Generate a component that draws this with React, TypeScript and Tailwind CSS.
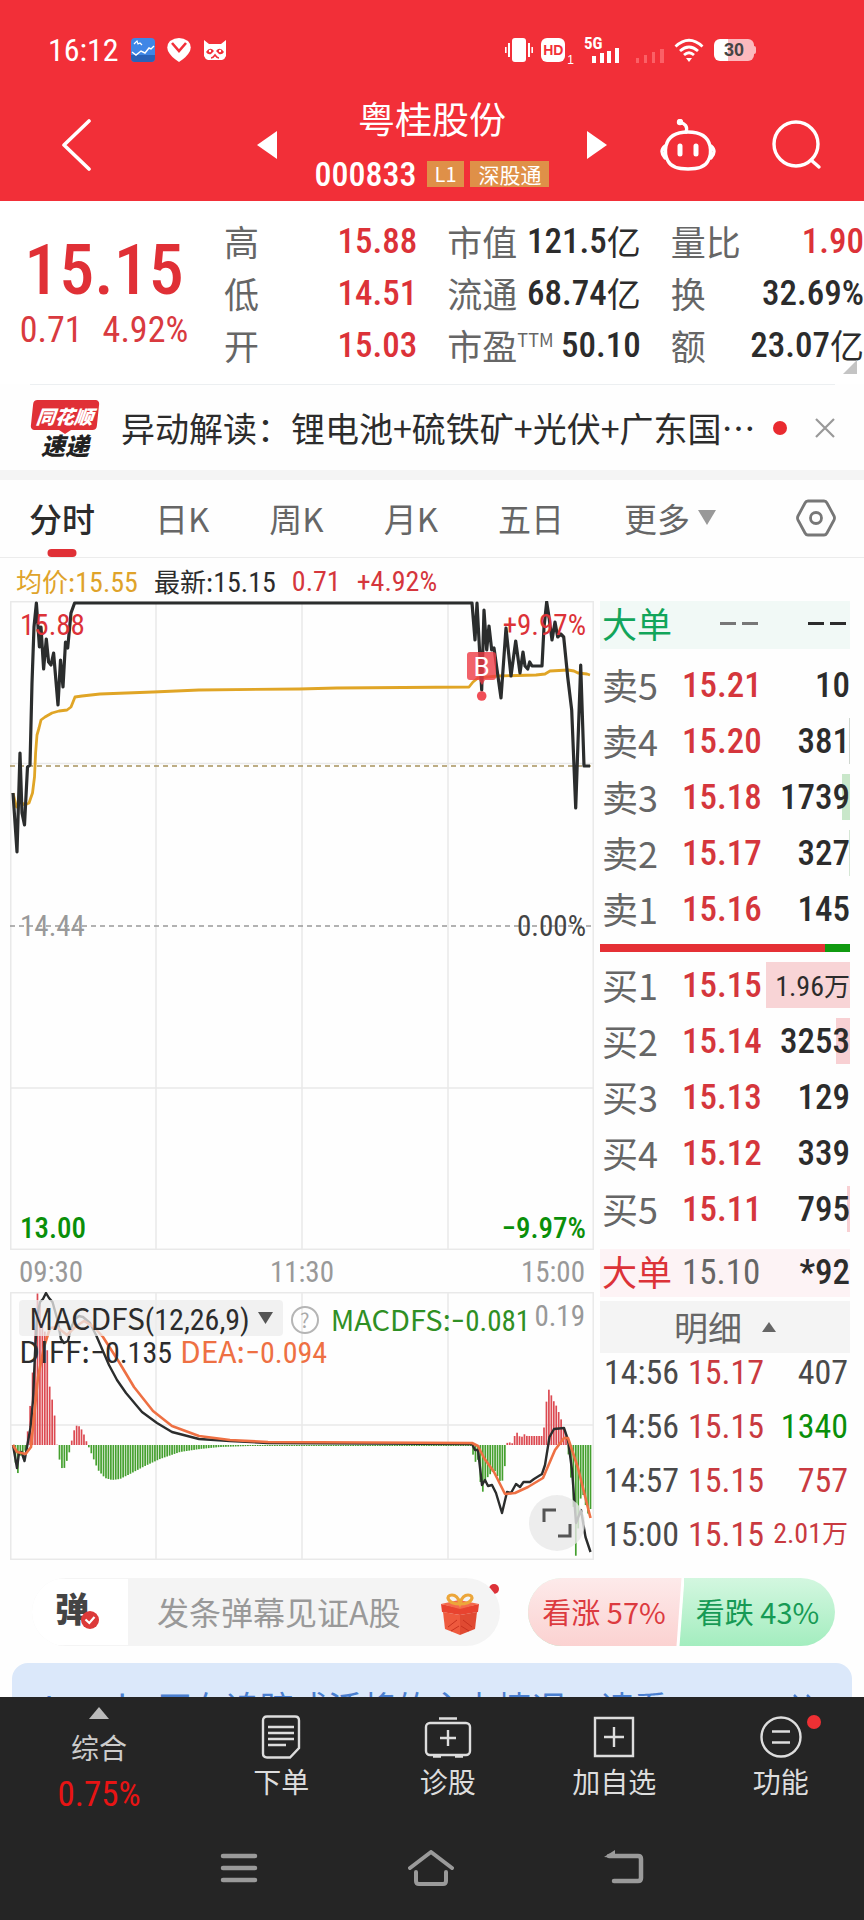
import React from "react";

const NUM =
  "font-['Roboto_Condensed','Liberation_Sans_Narrow',Roboto,'Noto_Sans_CJK_SC',sans-serif]";

type Point = [number, number];

const toPath = (points: Point[]) => points.map((p) => p.join(",")).join(" ");

/* ---------- chart data ---------- */

const PRICE: Point[] = [
  [13, 793], [17, 852], [20, 753], [22, 813], [24.5, 825], [27.5, 767], [30, 765], [32, 683], [34, 627],
  [36.4, 603], [39.4, 647], [41, 627], [43.6, 669], [46.3, 639], [48.6, 662], [51, 665], [53.6, 653],
  [58, 705], [60.5, 660], [63, 687], [65.5, 642], [67.7, 648], [71, 613], [74.6, 603], [472, 603],
  [475, 640], [477, 603], [479, 640], [481.7, 690], [484, 610], [486.7, 650], [489, 626], [491.7, 650],
  [494, 648], [501, 698], [506, 628], [511, 676], [515.7, 641], [520, 673], [523, 652], [525, 666],
  [527.7, 669], [529.7, 662], [532, 666], [542, 666], [544, 627], [546.7, 602], [549, 617], [552, 640],
  [555, 622], [557.7, 637], [560.7, 634], [563.7, 637], [567.7, 677], [571.7, 710], [575.7, 808],
  [580.7, 665], [584, 766], [590, 766],
];

const AVERAGE: Point[] = [
  [13, 793], [16.5, 807], [20, 801], [24.5, 805], [29, 803], [32.5, 793], [34.5, 777], [35.6, 753],
  [37, 735], [39, 728], [41, 720], [45, 717], [52, 713], [59, 711], [67, 710], [71, 707], [75, 697],
  [82, 696], [100, 694], [153, 692], [199, 690], [299, 689], [337, 688], [469, 687], [473, 682],
  [478, 678], [497.5, 676], [536, 675], [545, 674], [550, 671], [568, 670], [574, 671], [578, 673],
  [587, 674], [590, 675],
];

const DIFF: Point[] = [
  [13, 1445], [17, 1468], [19, 1453], [21.5, 1452], [24.5, 1461], [27, 1447], [30.6, 1427], [33, 1400],
  [35, 1353], [37, 1317], [40, 1302], [43, 1299], [46, 1293], [49, 1298], [52.5, 1302], [57.5, 1320],
  [61, 1339], [64, 1343], [68, 1341], [71, 1328], [75, 1319], [79, 1316], [83, 1317], [90, 1323],
  [96, 1335], [109, 1365], [117, 1380], [126, 1393], [142, 1412], [157, 1423], [172, 1432], [199, 1439],
  [230, 1441], [268, 1443], [472, 1444], [475, 1450], [478, 1450], [482, 1485], [485, 1480], [488, 1486],
  [492, 1485], [496, 1493], [502, 1513], [507, 1492], [511, 1493], [516, 1484], [520, 1487], [523.5, 1482],
  [530, 1482], [534, 1479], [542, 1474], [545, 1465], [549.5, 1437], [554, 1429], [564, 1428], [568, 1440],
  [572, 1470], [576, 1523], [581, 1510], [585.5, 1537], [590.5, 1552],
];

const DEA: Point[] = [
  [13, 1445], [17, 1452], [25.6, 1454], [31, 1447], [34, 1417], [38, 1377], [44, 1347], [50, 1328],
  [57, 1327], [67, 1335], [75, 1327], [84, 1321], [94, 1327], [103, 1337], [119, 1362], [134, 1387],
  [153, 1411], [172, 1426], [199, 1436], [230, 1440], [268, 1442], [472, 1443], [478, 1446], [484, 1458],
  [494, 1472], [505, 1494], [515, 1493], [528, 1487], [543, 1478], [555, 1450], [564, 1438], [568, 1438],
  [578, 1468], [590.5, 1518],
];

/* Histogram outline: positive values rise above the zero axis. */
const HISTOGRAM: Point[] = [
  [13, -2], [15, -12], [17, -37], [19.5, -12], [22, -8], [24.5, -13], [26.5, 7], [29, 21], [31, 53],
  [34, 90], [36.5, 153], [39, 149], [41.5, 124], [44, 117], [46.5, 106], [50, 54], [53.5, 40], [56, 16],
  [58, -14], [60.5, -15], [63, -29], [65.5, -18], [68, -14], [70.5, -1], [73, 10], [75, 18], [77.5, 20],
  [80, 18], [82.5, 14], [85, 8], [87, 2], [90, -5], [94, -15], [98, -25], [105, -33], [112, -35],
  [120, -34], [130, -29], [145, -21], [160, -14], [180, -7], [200, -4], [220, -2], [250, -1], [471, -1],
  [475, -18], [477.5, -12], [479.5, -25], [481.7, -55], [484, -38], [487, -33], [492, -27], [495, -26],
  [501, -38], [504, -33], [506, -5], [508, 6], [511, 0], [513, 3], [516, 14], [518.5, 10], [521, 7],
  [524, 11], [527, 9], [543, 9], [545, 26], [547, 50], [549.5, 57], [552, 47], [557, 38], [562, 23],
  [564.5, 14], [567, 6], [569, -15], [571.5, -38], [574, -70], [576, -115], [578.5, -80], [581, -50],
  [583.5, -50], [586, -62], [588.5, -70], [590.5, -64],
];

const valueAt = (x: number) => {
  for (let i = 1; i < HISTOGRAM.length; i++) {
    const [x0, y0] = HISTOGRAM[i - 1];
    const [x1, y1] = HISTOGRAM[i];
    if (x <= x1) return y0 + ((y1 - y0) * (x - x0)) / (x1 - x0);
  }
  return 0;
};

const BARS = Array.from({ length: 237 }, (_, i) => {
  const x = 13 + i * 2.447;
  return { x, v: valueAt(x) };
});

/* ---------- header ---------- */

function StatusBar() {
  return (
    <div className="flex h-[100px] items-center pl-12 pr-[108px] text-white">
      <span className={`${NUM} text-[32px] leading-8`}>16:12</span>
      <svg className="ml-3 h-6 w-6" viewBox="0 0 24 24">
        <rect width="24" height="24" rx="4" fill="#3f86e6" />
        <path d="M0 17H24V20a4 4 0 0 1-4 4H4a4 4 0 0 1-4-4z" fill="#2a62b8" />
        <path d="M1 14l4 3 5-4 4 2 4-5 2 1 3-3" fill="none" stroke="#fff" strokeWidth="1.4" />
        <path d="M3 6l3-3 1 3 2-1 2 2" fill="none" stroke="#fff" strokeWidth="1.2" />
      </svg>
      <svg className="ml-3 h-6 w-6" viewBox="0 0 24 24">
        <path d="M3 3Q12-3 21 3q4 4 2 10-3 6-11 11Q4 19 1 13-1 7 3 3z" fill="#fff" />
        <path d="M5 5l7 8 7-8" fill="none" stroke="#f22f38" strokeWidth="2.6" />
      </svg>
      <svg className="ml-3 h-6 w-6" viewBox="0 0 24 24">
        <path d="M1 2l5 4h12l5-4v16q-1 3-4 4H5q-3-1-4-4z" fill="#fff" />
        <path d="M3 14q4-6 8-1l-3 3q-3 1-5-2zM21 14q-4-6-8-1l3 3q3 1 5-2z" fill="#f22f38" />
        <circle cx="7" cy="13" r="1.2" fill="#fff" />
        <circle cx="17" cy="13" r="1.2" fill="#fff" />
        <path d="M8 20q2 0 4-3 2 3 4 3" fill="none" stroke="#f22f38" strokeWidth="1.6" />
      </svg>
      <div className="ml-auto flex items-center">
        <svg className="h-6 w-7" viewBox="0 0 28 24" fill="#fff">
          <rect x="7" y="0" width="14" height="24" rx="3" />
          <path d="M3 5h2v14H3zM0 9h1.6v6H0zM23 5h2v14h-2zM26.4 9H28v6h-1.6z" />
        </svg>
        <span className="ml-2 flex h-6 w-6 items-center justify-center rounded-md bg-white font-['Liberation_Sans'] text-[14px] leading-none font-bold text-[#f22f38]">
          HD
        </span>
        <span className="ml-0.5 self-end font-['Liberation_Sans'] text-[12px] leading-none">1</span>
        <svg className="ml-2.5 h-8 w-9 overflow-visible" viewBox="0 0 36 32" fill="#fff">
          <text x="0" y="15" fontSize="17" fontWeight="700" fontFamily="Roboto Condensed, sans-serif">5G</text>
          <path d="M8 22h4v7H8zM16 19h4v10h-4zM23 17h4v12h-4zM31 14h4v15h-4z" />
        </svg>
        <svg className="ml-4 h-7 w-7" viewBox="0 0 28 28" fill="#ff7b80">
          <path d="M0 22h3v5H0zM8 19h3v8H8zM16 16h3v11h-3zM24 13h4v14h-4z" opacity=".65" />
        </svg>
        <svg className="ml-2.5 h-6 w-[30px]" viewBox="0 0 30 24" fill="none" stroke="#fff" strokeWidth="2.8">
          <path d="M1.500 8.500Q15-4 28.500 8.500M6 13q9-8 18 0M10 17q5-4.500 10 0" />
          <path d="M12 20h6l-3 4z" fill="#fff" stroke="none" />
        </svg>
        <span className="ml-2.5 flex h-[22px] w-10 items-center justify-center rounded-md bg-linear-to-r from-white from-35% to-[#fcb9bd] to-35% font-['Liberation_Sans'] text-[18px] leading-none font-bold text-[#444]">
          30
        </span>
        <span className="h-2 w-0.5 rounded-r bg-[#fcb9bd]" />
      </div>
    </div>
  );
}

function TitleBar() {
  return (
    <div className="grid h-[101px] grid-cols-[1fr_350px_1fr] items-center pb-[13px] text-white">
      <button aria-label="返回" className="ml-[60px] w-8">
        <svg className="h-[52px] w-8" viewBox="0 0 32 52" fill="none" stroke="#fff" strokeWidth="3.600">
          <path d="M29 2L4 26l25 24" strokeLinejoin="round" strokeLinecap="round" />
        </svg>
      </button>
      <div className="flex items-center justify-between">
        <button aria-label="上一只">
          <svg className="h-7 w-5" viewBox="0 0 20 28"><path d="M20 0v28L0 14z" fill="#fff" /></svg>
        </button>
        <div className="flex flex-col items-center gap-[22px]">
          <h1 className="text-[37px] leading-9">粤桂股份</h1>
          <div className="flex h-8 items-center gap-1.5">
            <span className={`${NUM} mr-1 text-[34px] leading-8 font-medium`}>000833</span>
            <span className="bg-[#df9048] px-2 text-[20px] leading-[26px]">L1</span>
            <span className="bg-[#df9048] px-2 text-[21px] leading-[26px]">深股通</span>
          </div>
        </div>
        <button aria-label="下一只">
          <svg className="h-7 w-5" viewBox="0 0 20 28"><path d="M0 0v28l20-14z" fill="#fff" /></svg>
        </button>
      </div>
      <div className="flex items-center justify-end gap-14 pr-[42px]">
        <button aria-label="智能助手">
          <svg className="h-[52px] w-14" viewBox="0 0 56 52" fill="none" stroke="#fff" strokeWidth="3.400">
            <path d="M28 13C15 13 8 18 6 27c-1 5-1 10 2 15 3 6 9 8 20 8s17-2 20-8c3-5 3-10 2-15-2-9-9-14-22-14z" />
            <path d="M5 27q-6 5 0 12M51 27q6 5 0 12M26 13c2-6-1-8-6-10" strokeLinecap="round" />
            <circle cx="20" cy="3" r="1.500" />
            <path d="M20 27v8M36 27v8" strokeWidth="5" strokeLinecap="round" />
          </svg>
        </button>
        <button aria-label="搜索">
          <svg className="h-[50px] w-[50px]" viewBox="0 0 50 50" fill="none" stroke="#fff" strokeWidth="3.400">
            <circle cx="24" cy="24" r="22" />
            <path d="M39 40l8 7" strokeLinecap="round" />
          </svg>
        </button>
      </div>
    </div>
  );
}

/* ---------- quote ---------- */

function Stat({ label, sup, value, unit, red }: { label: string; sup?: string; value: string; unit?: string; red?: boolean }) {
  return (
    <div className="flex h-[52px] items-center justify-between whitespace-nowrap">
      <dt className="flex items-center text-[35px] leading-10 text-[#666]">
        {label}
        {sup && <sup className="top-0 mb-3 text-[18px] leading-5">{sup}</sup>}
      </dt>
      <dd className={`flex items-center text-[34px] leading-10 ${red ? "text-[#dc3238]" : "text-[#2c2c2c]"}`}>
        <span className={`${NUM} pt-0.5 text-[35px] font-medium`}>{value}</span>
        {unit}
      </dd>
    </div>
  );
}

function Quote() {
  return (
    <section className="relative flex h-[183px] bg-white pt-[14px]">
      <div className="flex w-[208px] flex-col items-center pt-5">
        <div className={`${NUM} text-[70px] leading-[70px] font-medium text-[#e03036]`}>15.15</div>
        <div className={`${NUM} flex gap-5 text-[36px] leading-[50px] text-[#d93a3f]`}>
          <span>0.71</span>
          <span>4.92%</span>
        </div>
      </div>
      <div className="grid flex-1 grid-cols-3 gap-[30px] pl-4">
        <dl>
          <Stat label="高" value="15.88" red />
          <Stat label="低" value="14.51" red />
          <Stat label="开" value="15.03" red />
        </dl>
        <dl>
          <Stat label="市值" value="121.5" unit="亿" />
          <Stat label="流通" value="68.74" unit="亿" />
          <Stat label="市盈" sup="TTM" value="50.10" />
        </dl>
        <dl>
          <Stat label="量比" value="1.90" red />
          <Stat label="换" value="32.69%" />
          <Stat label="额" value="23.07" unit="亿" />
        </dl>
      </div>
      <svg className="absolute right-[7px] bottom-[10px] h-[14px] w-[14px]" viewBox="0 0 14 14">
        <path d="M14 0v14H0z" fill="#c4c4c4" />
      </svg>
    </section>
  );
}

function NewsBar() {
  return (
    <section className="mr-[29px] ml-[30px] flex h-[86px] items-center border-t border-[#eceff1]">
      <div className="flex w-[70px] flex-col items-center">
        <div className="flex h-[30px] w-[66px] -skew-x-6 items-center justify-center rounded-sm bg-[#e03036] text-[19px] leading-none font-black text-white italic">
          同花顺
        </div>
        <svg className="h-1 w-3" viewBox="0 0 12 4"><path d="M0 0h12L6 4z" fill="#e03036" /></svg>
        <div className="text-[24px] leading-[22px] font-black text-[#222] italic">速递</div>
      </div>
      <a href="#news" className="ml-[21px] min-w-0 flex-1 truncate text-[34px] leading-[50px] text-[#2c2c2c]">
        异动解读：锂电池+硫铁矿+光伏+广东国⋯
      </a>
      <span className="ml-4 h-[14px] w-[14px] rounded-full bg-[#e92b30]" />
      <button aria-label="关闭" className="ml-7">
        <svg className="h-5 w-5" viewBox="0 0 20 20" stroke="#999" strokeWidth="2.200">
          <path d="M1 1l18 18M19 1L1 19" />
        </svg>
      </button>
    </section>
  );
}

function Tabs() {
  const tab = "text-[33px] leading-10 text-[#666]";
  return (
    <nav className="flex h-[78px] items-center justify-between border-b border-[#ececec] pr-[28px] pb-0.5 pl-[29px]">
      <div className="flex gap-[60px]">
        <button className="relative text-[33px] leading-10 font-medium text-[#2c2c2c]">
          分时
          <span className="absolute -bottom-[19px] left-1/2 h-2 w-[29px] -translate-x-1/2 rounded-full bg-[#e03036]" />
        </button>
        <button className={tab}>日K</button>
        <button className={tab}>周K</button>
        <button className={tab}>月K</button>
        <button className={tab}>五日</button>
        <button className={`${tab} flex items-center gap-2`}>
          更多
          <svg className="h-[15px] w-[18px]" viewBox="0 0 18 15"><path d="M0 0h18L9 15z" fill="#999" /></svg>
        </button>
      </div>
      <button aria-label="设置">
        <svg className="h-10 w-10" viewBox="0 0 40 40" fill="none" stroke="#777" strokeWidth="2.800">
          <path d="M12 3h16q2 0 3 2l7 13q1 2 0 4l-7 13q-1 2-3 2H12q-2 0-3-2L2 22q-1-2 0-4L9 5q1-2 3-2z" />
          <circle cx="20" cy="20" r="5.500" />
        </svg>
      </button>
    </nav>
  );
}

/* ---------- charts ---------- */

function PriceChart() {
  const label = `${NUM} absolute text-[29px] leading-8`;
  return (
    <div className="relative">
      <svg className="block w-full" viewBox="10 601 584 649" fill="none">
        <g stroke="#e9e9e9" strokeWidth="1.500">
          <path d="M156 601V1250M302 601V1250M448 601V1250M10 763.500H594M10 1088H594" />
          <path d="M10.800 601.800H593.200V1249.200H10.800z" />
        </g>
        <path d="M10 766H594" stroke="#a8935c" strokeWidth="1.300" strokeDasharray="5 4" />
        <path d="M10 926H594" stroke="#999" strokeWidth="1.500" strokeDasharray="5 4" />
        <polyline points={toPath(AVERAGE)} stroke="#e0a526" strokeWidth="2.800" strokeLinejoin="round" />
        <polyline points={toPath(PRICE)} stroke="#2b2d2d" strokeWidth="3.200" strokeLinejoin="round" />
        <path d="M470 652h23q3 0 3 3v22q0 3-3 3h-8l-3 5-3-5h-9q-3 0-3-3v-22q0-3 3-3z" fill="#ee3b45" opacity=".8" />
        <circle cx="481.700" cy="696" r="4.800" fill="#ee3b45" opacity=".9" />
        <text x="481.500" y="676" textAnchor="middle" fontSize="26" fill="#fff" fontFamily="Roboto, sans-serif">B</text>
      </svg>
      <span className={`${label} top-2 left-[10px] text-[#dc3238]`}>15.88</span>
      <span className={`${label} top-2 right-2 text-[#dc3238]`}>+9.97%</span>
      <span className={`${label} top-1/2 left-[10px] -translate-y-1/2 text-[#999]`}>14.44</span>
      <span className={`${label} top-1/2 right-2 -translate-y-1/2 text-[#444]`}>0.00%</span>
      <span className={`${label} bottom-1.5 left-[10px] font-medium text-[#0a8f0a]`}>13.00</span>
      <span className={`${label} right-2 bottom-1.5 font-medium text-[#0a8f0a]`}>−9.97%</span>
    </div>
  );
}

function MacdChart() {
  return (
    <div className="relative">
      <svg className="block w-full" viewBox="10 1292 584 268" fill="none">
        <g stroke="#e9e9e9" strokeWidth="1.500">
          <path d="M156 1292V1560M302 1292V1560M448 1292V1560M10 1425H594" />
          <path d="M10.800 1292.800H593.200V1559.200H10.800z" />
        </g>
        {BARS.map(({ x, v }) => (
          <rect
            key={x}
            x={x - 0.85}
            y={v > 0 ? 1445 - v : 1445}
            width="1.7"
            height={Math.abs(v)}
            fill={v > 0 ? "#dc4a52" : "#45a02f"}
          />
        ))}
        <polyline points={toPath(DIFF)} stroke="#2b2d2d" strokeWidth="2.400" strokeLinejoin="round" />
        <polyline points={toPath(DEA)} stroke="#ee7043" strokeWidth="2.600" strokeLinejoin="round" />
      </svg>
      <div className="absolute inset-x-0 top-0 px-[9px] pt-2">
        <div className="flex h-9 items-start whitespace-nowrap">
          <button className="flex h-9 items-center gap-2 rounded bg-[#ececec]/75 px-2.5 text-[30px] leading-8 text-[#2c2c2c]">
            <span>MACDFS<span className={NUM}>(12,26,9)</span></span>
            <svg className="h-3 w-[15px]" viewBox="0 0 15 12"><path d="M0 0h15L7.500 12z" fill="#555" /></svg>
          </button>
          <button aria-label="说明" className="mt-1.5 ml-2 flex h-7 w-7 items-center justify-center rounded-full border-2 border-[#b5b5b5] text-[20px] leading-none text-[#aaa]">
            ?
          </button>
          <span className="ml-3 text-[29px] leading-9 text-[#2f8f24]">
            MACDFS:<span className={NUM}>−0.081</span>
          </span>
          <span className={`${NUM} ml-auto text-[29px] leading-8 text-[#999]`}>0.19</span>
        </div>
        <div className="flex gap-2 text-[30px] leading-7 whitespace-nowrap">
          <span className="text-[#2c2c2c]">DIFF:<span className={NUM}>−0.135</span></span>
          <span className="text-[#ee7043]">DEA:<span className={NUM}>−0.094</span></span>
        </div>
      </div>
      <button aria-label="全屏" className="absolute right-[9px] bottom-[9px] flex h-[56px] w-[56px] items-center justify-center rounded-full bg-[#e8e8e8]/80">
        <svg className="h-[30px] w-[30px]" viewBox="0 0 30 30" fill="none" stroke="#555" strokeWidth="3">
          <path d="M2 14V2h12M28 16v12H16" />
        </svg>
      </button>
    </div>
  );
}

function Charts() {
  return (
    <div className="min-w-0 flex-1">
      <PriceChart />
      <div className={`${NUM} flex h-[42px] items-center justify-between px-[9px] pt-0.5 text-[29px] leading-8 text-[#999]`}>
        <span>09:30</span>
        <span>11:30</span>
        <span>15:00</span>
      </div>
      <MacdChart />
    </div>
  );
}

/* ---------- order book ---------- */

type Level = { name: string; price: string; volume: string; unit?: string; depth?: string };

const ASKS: Level[] = [
  { name: "卖5", price: "15.21", volume: "10" },
  { name: "卖4", price: "15.20", volume: "381", depth: "w-px bg-[#cfd6cf]" },
  { name: "卖3", price: "15.18", volume: "1739", depth: "w-2 bg-[#c9e7ca]" },
  { name: "卖2", price: "15.17", volume: "327", depth: "w-px bg-[#d5e6d5]" },
  { name: "卖1", price: "15.16", volume: "145" },
];

const BIDS: Level[] = [
  { name: "买1", price: "15.15", volume: "1.96", unit: "万", depth: "w-[84px] bg-[#f8d4d6]" },
  { name: "买2", price: "15.14", volume: "3253", depth: "w-[14px] bg-[#f8d0d3]" },
  { name: "买3", price: "15.13", volume: "129" },
  { name: "买4", price: "15.12", volume: "339" },
  { name: "买5", price: "15.11", volume: "795", depth: "w-[3px] bg-[#f8d0d3]" },
];

function Levels({ rows, label }: { rows: Level[]; label: string }) {
  return (
    <table aria-label={label} className="w-full table-fixed">
      <tbody>
        {rows.map((r) => (
          <tr key={r.name} className="h-14 whitespace-nowrap">
            <td className="w-[82px] p-0 pb-0.5 pl-0.5 text-[36px] leading-[46px] text-[#666]">{r.name}</td>
            <td className={`${NUM} w-[84px] p-0 pt-0.5 text-[35px] leading-[46px] font-medium text-[#d5363c]`}>{r.price}</td>
            <td className="relative p-0 pt-0.5 text-right text-[#2c2c2c]">
              {r.depth && <span className={`absolute inset-y-[5px] right-0 ${r.depth}`} />}
              <span className={`${NUM} relative ${r.unit ? "text-[28px]" : "text-[35px] font-medium"} leading-[46px]`}>
                {r.volume}
              </span>
              {r.unit && <span className="relative text-[26px] leading-[46px]">{r.unit}</span>}
            </td>
          </tr>
        ))}
      </tbody>
    </table>
  );
}

const TRADES = [
  { time: "14:56", price: "15.17", volume: "407", tone: "text-[#4a4a4a]" },
  { time: "14:56", price: "15.15", volume: "1340", tone: "text-[#0a8f0a]" },
  { time: "14:57", price: "15.15", volume: "757", tone: "text-[#c93a40]" },
  { time: "15:00", price: "15.15", volume: "2.01", unit: "万", tone: "text-[#c93a40]" },
];

function OrderBook() {
  return (
    <aside className="w-[250px] shrink-0">
      <div className="flex h-12 items-center bg-[#f1f9f6] pb-1 pl-0.5 text-[35px] leading-[44px]">
        <span className="w-[118px] text-[#12a55a]">大单</span>
        <span className="flex w-[88px] gap-1.5 text-[#777]">
          <i className="h-[3px] w-4 bg-current" />
          <i className="h-[3px] w-4 bg-current" />
        </span>
        <span className="flex gap-1.5 text-[#2c2c2c]">
          <i className="h-[3px] w-4 bg-current" />
          <i className="h-[3px] w-4 bg-current" />
        </span>
      </div>
      <div className="pt-2">
        <Levels rows={ASKS} label="卖盘" />
      </div>
      <div className="mt-[7px] flex h-2">
        <div className="w-9/10 bg-[#e53035]" />
        <div className="flex-1 bg-[#109a10]" />
      </div>
      <div className="pt-[5px]">
        <Levels rows={BIDS} label="买盘" />
      </div>
      <div className="mt-3 flex h-12 items-center bg-[#fdf3f5] pb-1 pl-0.5 text-[35px] leading-[44px]">
        <span className="w-[80px] text-[#dc3238]">大单</span>
        <span className={`${NUM} pt-1 text-[35px] text-[#666]`}>15.10</span>
        <span className={`${NUM} ml-auto pt-1 text-[35px] font-medium text-[#2c2c2c]`}>*92</span>
      </div>
      <button className="mt-1 flex h-[52px] w-full items-center justify-center gap-5 bg-[#f4f4f4] text-[34px] leading-[46px] text-[#666]">
        明细
        <svg className="h-[10px] w-[14px]" viewBox="0 0 14 10"><path d="M0 10h14L7 0z" fill="#666" /></svg>
      </button>
      <table aria-label="成交明细" className="-mt-2 w-full table-fixed">
        <tbody>
          {TRADES.map((t, i) => (
            <tr key={i} className={`${NUM} h-[54px] text-[34px] leading-[46px] whitespace-nowrap`}>
              <td className="w-[88px] p-0 pl-1 text-[#4a4a4a]">{t.time}</td>
              <td className="w-[80px] p-0 text-[#c93a40]">{t.price}</td>
              <td className={`p-0 pr-0.5 text-right ${t.tone} ${t.unit ? "text-[28px]" : ""}`}>
                {t.volume}
                {t.unit && <span className="text-[26px]">{t.unit}</span>}
              </td>
            </tr>
          ))}
        </tbody>
      </table>
    </aside>
  );
}

/* ---------- bottom ---------- */

function Interaction() {
  return (
    <section className="mt-4 flex h-[70px] items-center justify-between pr-[29px] pl-8">
      <div className="relative flex h-[68px] w-[468px] items-center overflow-hidden rounded-full bg-[#f4f4f4]">
        <button aria-label="弹幕开关" className="relative flex h-full w-24 items-center justify-center border-y border-[#f4f4f4] bg-white text-[34px] leading-none font-black text-[#444]">
          <span className="pr-4 pb-2">弹</span>
          <svg className="absolute right-[29px] bottom-4 h-[18px] w-[18px]" viewBox="0 0 18 18">
            <circle cx="9" cy="9" r="9" fill="#dc3a3a" />
            <path d="M4.500 8.500l3.800 3.500 5.200-6" fill="none" stroke="#fff" strokeWidth="2.200" />
          </svg>
        </button>
        <input
          aria-label="发弹幕"
          placeholder="发条弹幕见证A股"
          className="h-full min-w-0 flex-1 bg-transparent pb-0.5 pl-[29px] text-[32px] outline-none placeholder:text-[#999]"
        />
        <svg className="mt-1 mr-5 h-[42px] w-10" viewBox="0 0 40 42">
          <path d="M1 11l19 4 19-4-1 8-18 3L2 19z" fill="#e8432f" />
          <path d="M3 19l17 3v20L5 36z" fill="#ee5a3e" />
          <path d="M37 19l-17 3v20l15-6z" fill="#e04a32" />
          <path d="M1 11l18-4 20 4-19 5z" fill="#f4694b" />
          <path d="M8 34l9-7M11 38l8-5M32 34l-9-7M29 38l-8-5" stroke="#c8321f" strokeWidth="1" />
          <path d="M20 11C7 11 5 2 12 2c5 0 7 5 8 8 1-3 3-8 8-8 7 0 5 9-8 9z" fill="none" stroke="#eca63a" strokeWidth="3.200" />
        </svg>
      </div>
      <span className="mb-[46px] -ml-10 h-[10px] w-[10px] rounded-full bg-[#dc3238]" />
      <div className="flex h-[68px] w-[307px] overflow-hidden rounded-full bg-linear-to-b from-[#d3f7e0] to-[#a3edbf] text-[29px] leading-10 whitespace-nowrap">
        <button className="relative flex w-[152px] items-center justify-center pb-0.5 text-[#dc3a3f]">
          <svg className="absolute inset-0 h-full w-[156px]" viewBox="0 0 156 68" preserveAspectRatio="none">
            <defs>
              <linearGradient id="up" x1="0" y1="0" x2="0" y2="1">
                <stop offset="0" stopColor="#fdeaea" />
                <stop offset="1" stopColor="#fbd2d1" />
              </linearGradient>
            </defs>
            <path d="M0 0h156l-5 68H0z" fill="url(#up)" />
            <path d="M155 0l-5 68" stroke="#fff" strokeWidth="3" />
          </svg>
          <span className="relative">看涨 57%</span>
        </button>
        <button className="flex-1 pb-0.5 text-[#169a55]">看跌 43%</button>
      </div>
    </section>
  );
}

const ICON = "h-[44px] w-12";

const ACTIONS = [
  {
    label: "下单",
    icon: (
      <svg className={ICON} viewBox="0 0 48 44" fill="none" stroke="#ddd" strokeWidth="2.400">
        <path d="M10 1.500h28q4 0 4 4V33l-9 9.500H10q-4 0-4-4V5.500q0-4 4-4zM11 12h26M11 18h26M11 24h26M11 30h18" />
      </svg>
    ),
  },
  {
    label: "诊股",
    icon: (
      <svg className={ICON} viewBox="0 0 48 44" fill="none" stroke="#ddd" strokeWidth="2.400">
        <rect x="2" y="8" width="44" height="32" rx="4" />
        <path d="M15 3.500h18M24 15v16M16 23h16M9 41.500h8M31 41.500h8" />
      </svg>
    ),
  },
  {
    label: "加自选",
    icon: (
      <svg className={ICON} viewBox="0 0 48 44" fill="none" stroke="#ddd" strokeWidth="2.400">
        <path d="M5 3h38v38H5zM24 12v20M14 22h20" />
      </svg>
    ),
  },
  {
    label: "功能",
    dot: true,
    icon: (
      <svg className={ICON} viewBox="0 0 48 44" fill="none" stroke="#ddd" strokeWidth="2.400">
        <circle cx="24" cy="22" r="19.500" />
        <path d="M15 16.500h18M15 27.500h18" />
      </svg>
    ),
  },
];

function BottomNav() {
  return (
    <footer className="flex-1 bg-[#252525] text-[#ddd]">
      <nav className="grid h-[120px] grid-cols-[198px_1fr_1fr_1fr_1fr] pt-2.5 text-[28px] leading-10">
        <button className="flex flex-col items-center text-[#ccc]">
          <svg className="h-[12px] w-5" viewBox="0 0 20 12"><path d="M0 12h20L10 0z" fill="#bbb" /></svg>
          <span className="mt-2">综合</span>
          <span className={`${NUM} mt-2 text-[35px] text-[#e81414]`}>0.75%</span>
        </button>
        {ACTIONS.map((a) => (
          <button key={a.label} className="flex flex-col items-center pt-2">
            <span className="relative">
              {a.icon}
              {a.dot && <span className="absolute top-0 -right-4 h-[14px] w-[14px] rounded-full bg-[#ee3034]" />}
            </span>
            <span className="mt-0.5">{a.label}</span>
          </button>
        ))}
      </nav>
      <div className="flex h-[103px] items-start justify-center gap-[150px] pt-[33px]">
        <button aria-label="最近任务">
          <svg className="h-9 w-[38px]" viewBox="0 0 38 36" stroke="#9a9a9a" strokeWidth="4.500" strokeLinecap="round">
            <path d="M3 6h32M3 18h32M3 30h32" />
          </svg>
        </button>
        <button aria-label="主页">
          <svg className="h-9 w-[46px]" viewBox="0 0 46 36" fill="none" stroke="#9a9a9a" strokeWidth="4" strokeLinecap="round" strokeLinejoin="round">
            <path d="M2 18L23 2l21 16M8 22v9q0 3 3 3h24q3 0 3-3v-9" />
          </svg>
        </button>
        <button aria-label="后退">
          <svg className="h-9 w-10" viewBox="0 0 40 36" fill="none" stroke="#9a9a9a" strokeWidth="4.500" strokeLinecap="round">
            <path d="M5 6h29q3 0 3 3v19q0 3-3 3H10" />
            <path d="M0 7l11-7v8z" fill="#9a9a9a" stroke="none" />
          </svg>
        </button>
      </div>
    </footer>
  );
}

export default function App() {
  return (
    <div className="flex min-h-screen flex-col overflow-hidden bg-[#fefefe] font-['Noto_Sans_CJK_SC',sans-serif]">
      <header className="bg-[#f22f38]">
        <StatusBar />
        <TitleBar />
      </header>
      <Quote />
      <NewsBar />
      <div className="h-[10px] bg-[#f4f4f4]" />
      <Tabs />
      <div className="flex h-[43px] items-center gap-4 pt-1 pl-4 text-[26px] leading-8 whitespace-nowrap">
        <span className="text-[#dfa32a]">均价:<span className={`${NUM} text-[28px]`}>15.55</span></span>
        <span className="text-[#2c2c2c]">最新:<span className={`${NUM} text-[28px]`}>15.15</span></span>
        <span className={`${NUM} text-[28px] text-[#d5363c]`}>0.71</span>
        <span className={`${NUM} text-[28px] text-[#d5363c]`}>+4.92%</span>
      </div>
      <main className="flex items-start gap-1.5 pr-[14px] pl-[10px]">
        <Charts />
        <OrderBook />
      </main>
      <Interaction />
      <a href="#level2" className="mx-3 mt-4 flex h-[34px] items-start justify-between overflow-hidden rounded-t-2xl bg-[#dbe8fa] px-8 pt-7 text-[34px] leading-8 whitespace-nowrap text-[#4a7fd0]">
        <span>Level-2正在追踪或活将的主力情况，请看</span>
        <svg className="mt-0.5 h-6 w-7" viewBox="0 0 28 24" fill="none" stroke="#4a7fd0" strokeWidth="2.500">
          <path d="M2 2l10 10L2 22M15 2l10 10-10 10" />
        </svg>
      </a>
      <BottomNav />
    </div>
  );
}
